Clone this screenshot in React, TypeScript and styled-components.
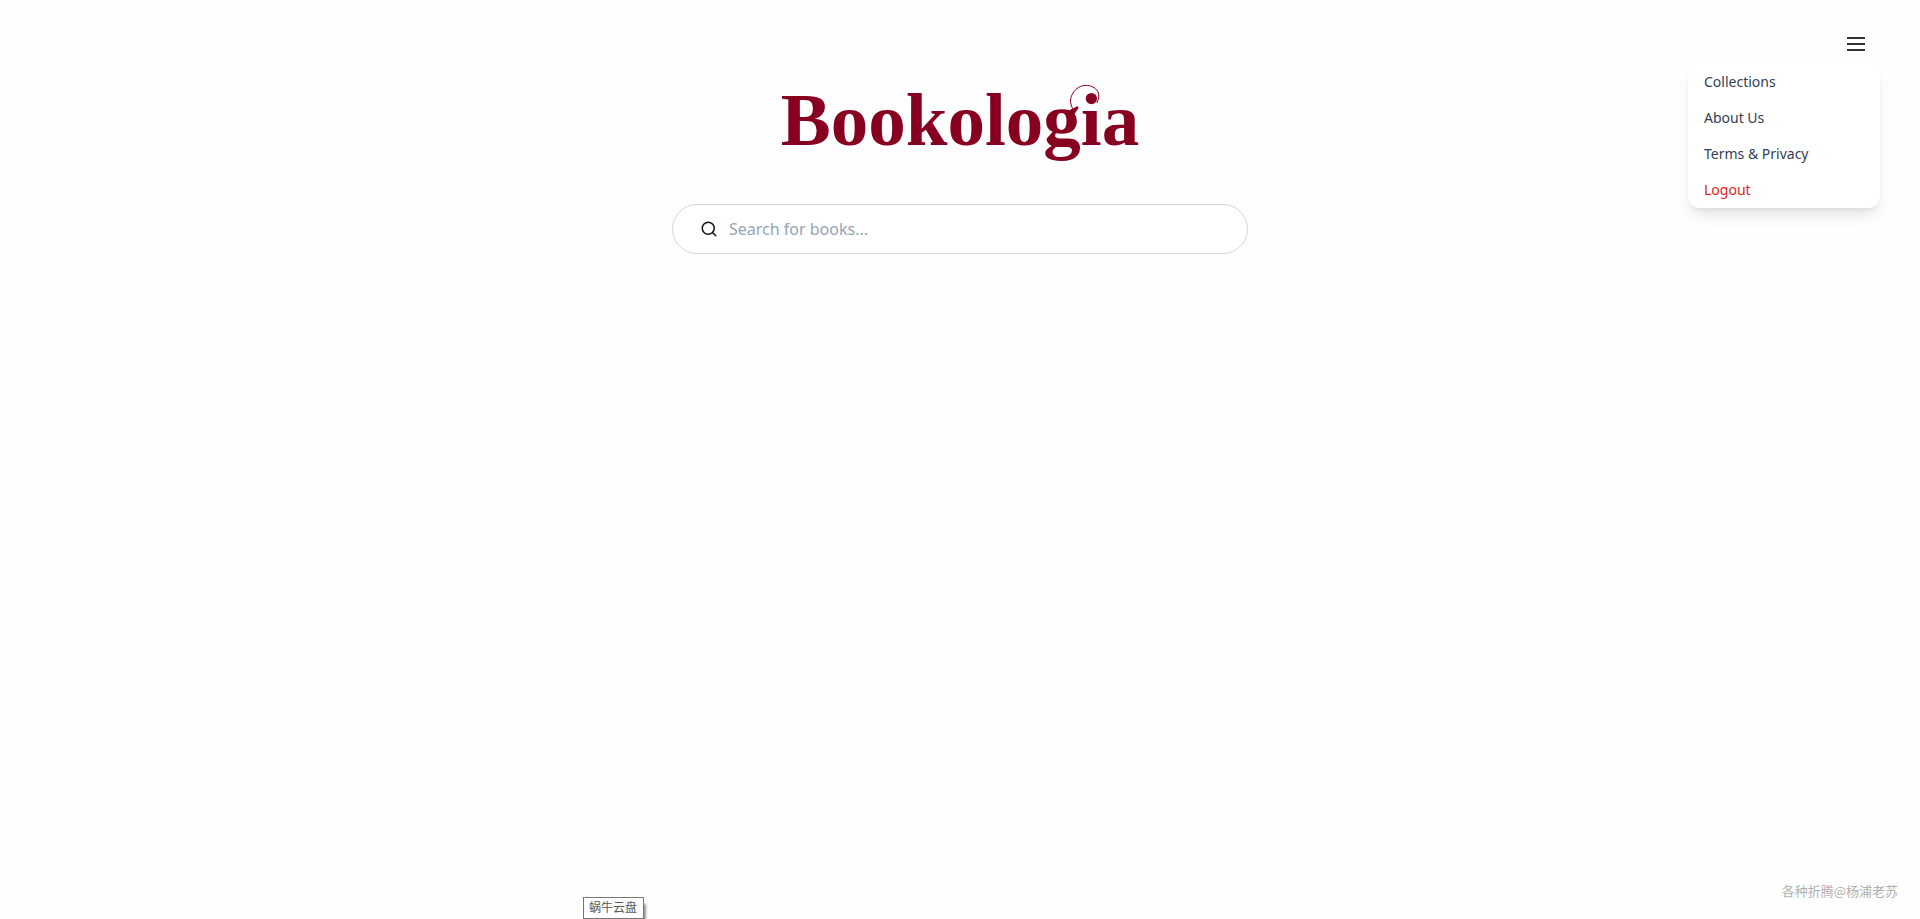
import React from "react";
import styled, { createGlobalStyle } from "styled-components";

const GlobalStyle = createGlobalStyle`
  *, *::before, *::after { box-sizing: border-box; }
  body {
    margin: 0;
    background: #fefefe;
    color: #334155;
    font-family: "Noto Sans", "Noto Sans CJK SC", sans-serif;
  }
`;

const Page = styled.div`
  position: relative;
  display: flex;
  flex-direction: column;
  min-height: 100vh;
  overflow: hidden;
`;

const Main = styled.main`
  flex: 1;
  display: flex;
  flex-direction: column;
  align-items: center;
  gap: 40px;
  padding: 76px 16px 0;
`;

const Logo = styled.h1`
  position: relative;
  margin: 0;
  color: #880020;
  font-family: "Liberation Serif", serif;
  font-size: 75px;
  font-weight: 700;
  line-height: 88px;
`;

const Swash = styled.svg`
  position: absolute;
  top: 8px;
  right: 36px;
  overflow: visible;
`;

const SearchBar = styled.form`
  display: flex;
  align-items: center;
  gap: 11px;
  width: 100%;
  max-width: 576px;
  height: 50px;
  padding: 0 27px;
  border: 1px solid #d1d5db;
  border-radius: 25px;
  background: #fff;
`;

const SearchInput = styled.input`
  flex: 1;
  min-width: 0;
  padding: 0;
  border: 0;
  outline: 0;
  background: transparent;
  color: #334155;
  font-family: inherit;
  font-size: 16px;
  line-height: 24px;
  &::placeholder { color: #94a3b8; opacity: 1; }
`;

const MenuArea = styled.nav`
  position: absolute;
  top: 24px;
  right: 40px;
  display: flex;
  flex-direction: column;
  align-items: flex-end;
  width: 192px;
`;

const MenuButton = styled.button`
  display: flex;
  margin-right: 4px;
  padding: 8px;
  border: 0;
  background: transparent;
  color: #333;
  cursor: pointer;
`;

const Menu = styled.div`
  display: flex;
  flex-direction: column;
  width: 100%;
  border-radius: 12px;
  background: #fff;
  box-shadow: 0 10px 15px -3px rgba(0, 0, 0, 0.1), 0 4px 6px -4px rgba(0, 0, 0, 0.1);
`;

const MenuLink = styled.a<{ $danger?: boolean }>`
  padding: 8px 16px;
  color: ${(p) => (p.$danger ? "#dc2626" : "#334155")};
  font-size: 14px;
  line-height: 20px;
  text-decoration: none;
`;

const Tooltip = styled.div`
  position: absolute;
  bottom: 0;
  left: 583px;
  padding: 0 6px 0 5px;
  border: 1px solid #767676;
  background: #fff;
  box-shadow: 3px 6px 2px -1px #999;
  color: #575757;
  font-size: 12px;
  line-height: 20px;
`;

const Watermark = styled.footer`
  align-self: flex-end;
  padding: 0 22px 18px;
  color: #b0b0b0;
  font-family: "Noto Sans CJK SC", sans-serif;
  font-size: 13px;
  line-height: 20px;
`;

const links = [
  { label: "Collections" },
  { label: "About Us" },
  { label: "Terms & Privacy" },
  { label: "Logout", danger: true },
];

export default function App() {
  return (
    <>
      <GlobalStyle />
      <Page>
        <Main>
          <Logo>
            Bookologia
            <Swash width="34" height="34" viewBox="0 0 34 34" fill="none" aria-hidden="true">
              <path d="M6 28C1 22 0 15 4 9C10 -1 24 -1 29 8Q31 12 28 19" stroke="#880020" strokeWidth="1" />
            </Swash>
          </Logo>
          <SearchBar role="search">
            <svg width="18" height="18" viewBox="0 0 24 24" fill="none" stroke="#111" strokeWidth="2" strokeLinecap="round" aria-hidden="true">
              <circle cx="11" cy="11" r="8" />
              <path d="m21 21-4.340-4.340" />
            </svg>
            <SearchInput type="text" aria-label="Search for books" placeholder="Search for books..." />
          </SearchBar>
        </Main>
        <MenuArea>
          <MenuButton type="button" aria-label="Menu" aria-expanded="true">
            <svg width="24" height="24" viewBox="0 0 24 24" stroke="currentColor" strokeWidth="2" aria-hidden="true">
              <path d="M3 6h18M3 12h18M3 18h18" />
            </svg>
          </MenuButton>
          <Menu>
            {links.map((l) => (
              <MenuLink key={l.label} href="#" $danger={l.danger}>{l.label}</MenuLink>
            ))}
          </Menu>
        </MenuArea>
        <Tooltip role="tooltip">蜗牛云盘</Tooltip>
        <Watermark>各种折腾@杨浦老苏</Watermark>
      </Page>
    </>
  );
}
